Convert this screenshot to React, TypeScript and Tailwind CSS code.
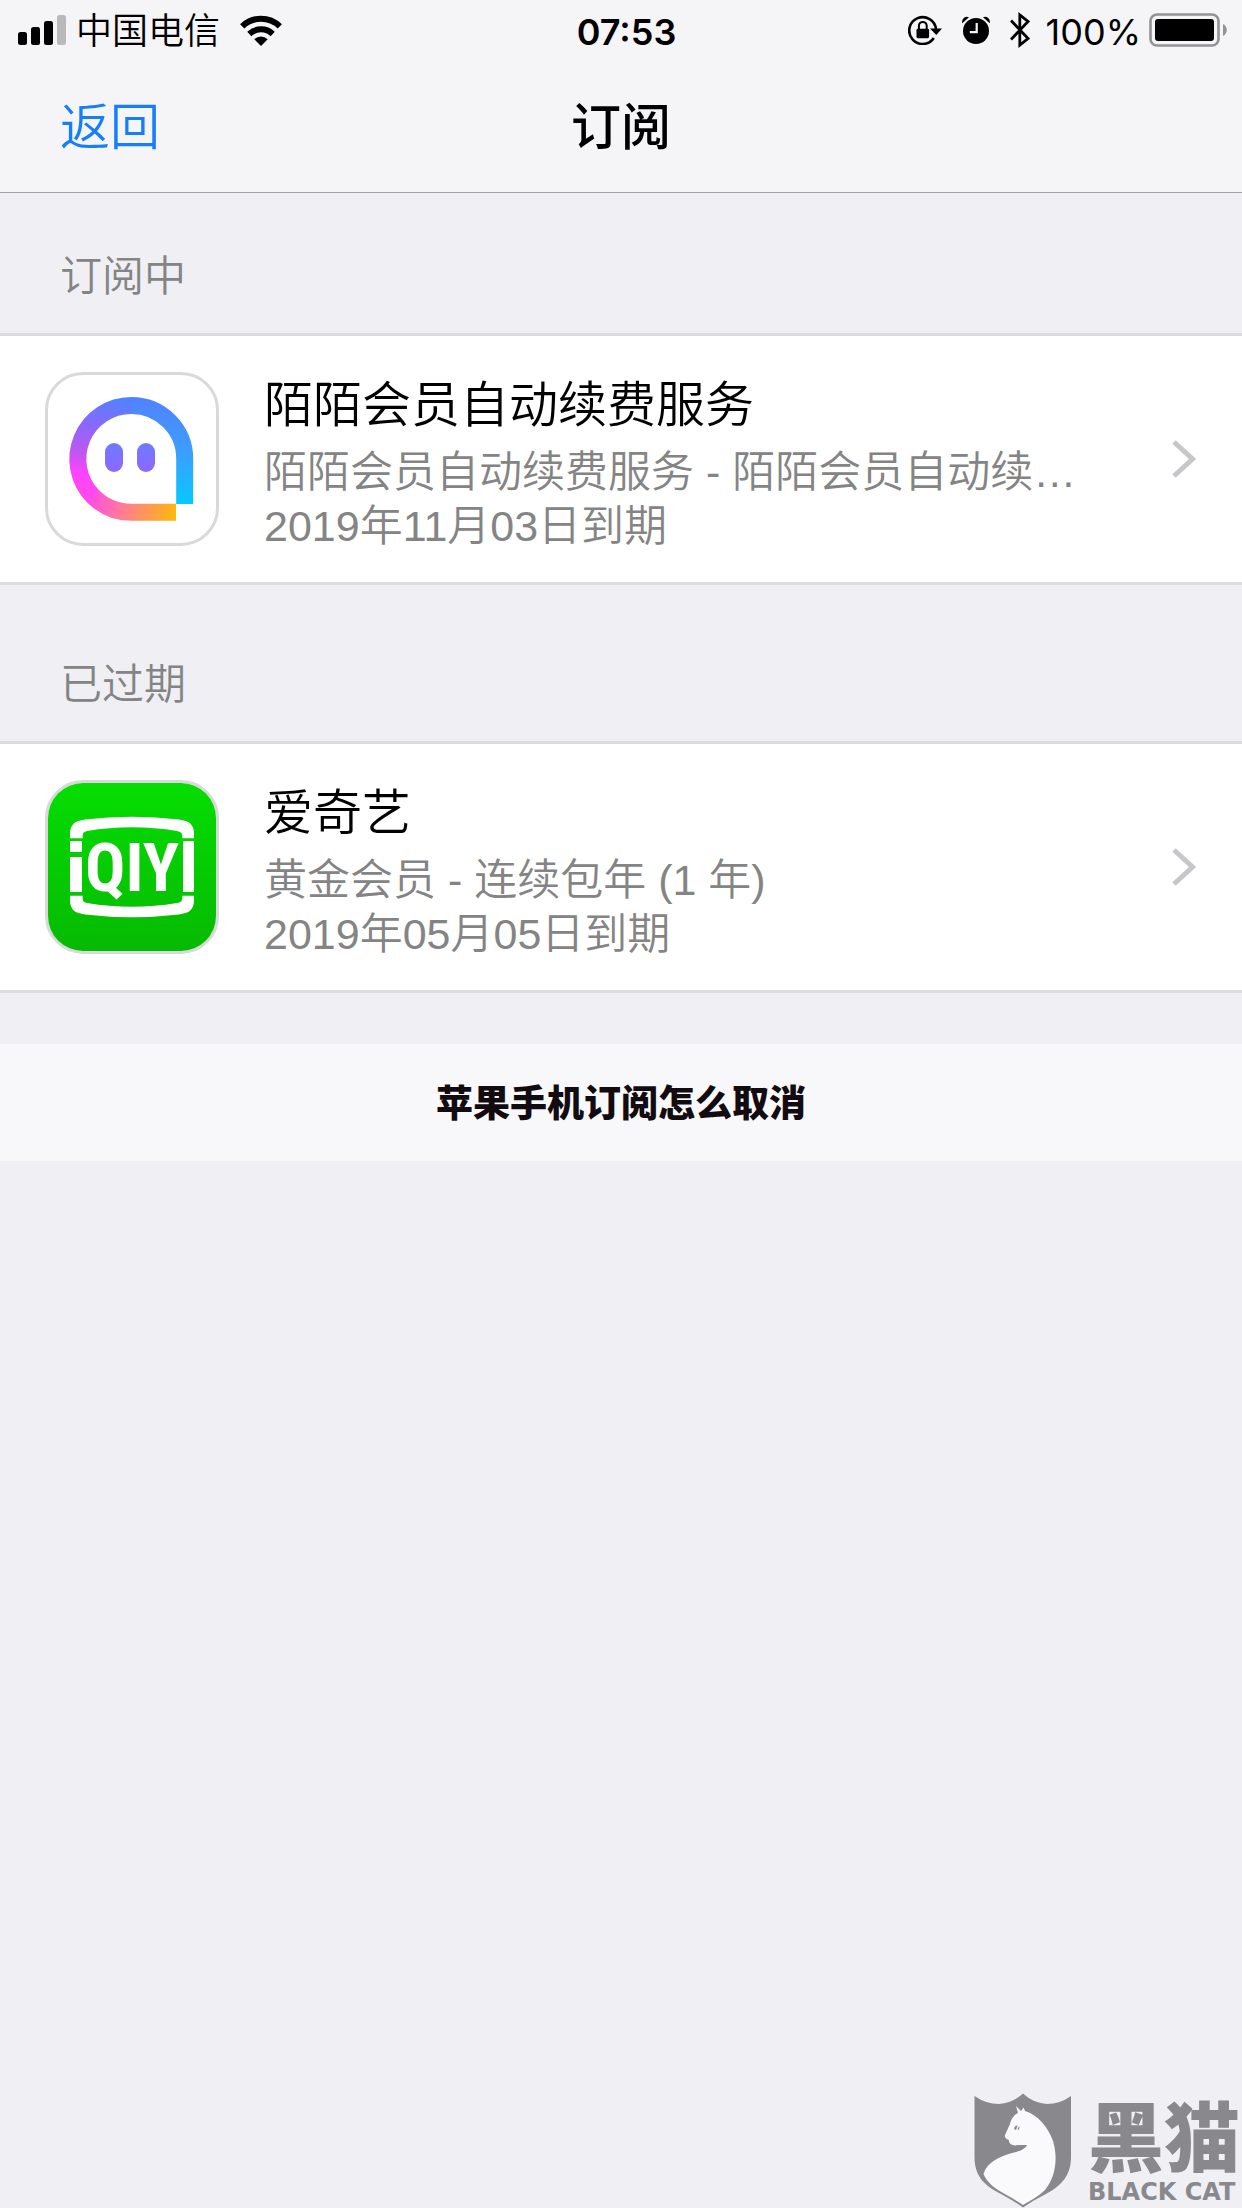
import React from "react";

interface Subscription {
  id: string;
  name: string;
  plan: string;
  expiry: string;
  icon: () => React.JSX.Element;
}

interface SubscriptionGroup {
  id: string;
  title: string;
  items: Subscription[];
}

function MomoIcon() {
  return (
    <svg viewBox="3 3 168 168" className="size-full" aria-hidden="true">
      <defs>
        <linearGradient id="momo-right" gradientUnits="userSpaceOnUse" x1="0" y1="25" x2="0" y2="132">
          <stop offset="0" stopColor="#5182ff" />
          <stop offset="0.5" stopColor="#3d9dff" />
          <stop offset="1" stopColor="#06c8ff" />
        </linearGradient>
        <linearGradient id="momo-left" gradientUnits="userSpaceOnUse" x1="70" y1="25" x2="45" y2="118">
          <stop offset="0" stopColor="#5182ff" />
          <stop offset="0.35" stopColor="#8a68ff" />
          <stop offset="0.65" stopColor="#bd57ee" />
          <stop offset="0.85" stopColor="#fb43ff" />
          <stop offset="1" stopColor="#ff48ee" />
        </linearGradient>
        <linearGradient id="momo-bottom" gradientUnits="userSpaceOnUse" x1="44" y1="118" x2="131" y2="140">
          <stop offset="0" stopColor="#ff48ee" />
          <stop offset="0.4" stopColor="#ff7a98" />
          <stop offset="1" stopColor="#ffb80c" />
        </linearGradient>
        <linearGradient id="momo-eye" x1="0" y1="0" x2="0" y2="1">
          <stop offset="0" stopColor="#6c7cff" />
          <stop offset="1" stopColor="#8d67ff" />
        </linearGradient>
      </defs>
      <g fill="none" strokeWidth="17">
        <path d="M139.7 132V87A53.3 53.3 0 0 0 86 33.5" stroke="url(#momo-right)" />
        <path d="M86.5 33.5A53.5 53.5 0 0 0 48.2 124.5" stroke="url(#momo-left)" />
        <path d="M47.8 124A53.5 53.5 0 0 0 86.5 140.3H131" stroke="url(#momo-bottom)" />
      </g>
      <rect x="60" y="71" width="18" height="29" rx="9" fill="url(#momo-eye)" />
      <rect x="92" y="71" width="18" height="29" rx="9" fill="url(#momo-eye)" />
    </svg>
  );
}

function IqiyiIcon() {
  const frame =
    "M25 58.3V54C25 44 30 41 40 39.5Q87 34 134 39.5C144 41 149 44 149 54V58.3H137.3V55Q137 52 132 51Q87 43.5 42 51Q37.7 52 37.7 55V58.3Z";

  return (
    <svg viewBox="3 3 168 168" className="size-full" aria-hidden="true">
      <defs>
        <linearGradient id="iqiyi-bg" x1="0" y1="0" x2="0" y2="1">
          <stop offset="0" stopColor="#06de02" />
          <stop offset="1" stopColor="#06b902" />
        </linearGradient>
      </defs>
      <rect width="174" height="174" fill="url(#iqiyi-bg)" />
      <g fill="#fff">
        <path d={frame} />
        <path d={frame} transform="matrix(1 0 0 -1 0 174)" />
        <rect x="25" y="61" width="12" height="11" />
        <rect x="25" y="77" width="12" height="35" />
        <rect x="138" y="61" width="11" height="51" />
        <text
          x="87"
          y="111"
          textAnchor="middle"
          fontSize="67"
          className="font-['Liberation_Sans_Narrow','Roboto_Condensed','DejaVu_Sans_Condensed',sans-serif] font-bold"
        >
          QIY
        </text>
      </g>
    </svg>
  );
}

const groups: SubscriptionGroup[] = [
  {
    id: "active",
    title: "订阅中",
    items: [
      {
        id: "momo",
        name: "陌陌会员自动续费服务",
        plan: "陌陌会员自动续费服务 - 陌陌会员自动续费服务",
        expiry: "2019年11月03日到期",
        icon: MomoIcon,
      },
    ],
  },
  {
    id: "expired",
    title: "已过期",
    items: [
      {
        id: "iqiyi",
        name: "爱奇艺",
        plan: "黄金会员 - 连续包年 (1 年)",
        expiry: "2019年05月05日到期",
        icon: IqiyiIcon,
      },
    ],
  },
];

function StatusBar() {
  return (
    <div className="grid h-15 grid-cols-[1fr_auto_1fr] items-center pr-[15px] pl-[18px] text-[36px] leading-[44px] text-black">
      <div className="flex items-center">
        <svg viewBox="0 0 48 30" className="h-[30px] w-12" aria-hidden="true">
          <rect x="0" y="17" width="9" height="13" rx="2.5" />
          <rect x="13" y="12" width="9" height="18" rx="2.5" />
          <rect x="26" y="6" width="9" height="24" rx="2.5" />
          <rect x="39" y="0" width="9" height="30" rx="2.5" fill="#b9b9bb" />
        </svg>
        <span className="ml-2.5 pt-1 font-[350]">中国电信</span>
        <svg viewBox="0 0 42 31" className="ml-5 h-[31px] w-[42px]" aria-hidden="true">
          <g fill="none" stroke="#000" strokeWidth="6">
            <path d="M2.2 11.3A27 27 0 0 1 39.8 11.3" />
            <path d="M9.3 19A17 17 0 0 1 32.7 19" />
          </g>
          <path d="M21 31L14.3 24.2A9.6 9.6 0 0 1 27.7 24.2Z" />
        </svg>
      </div>

      <time className="pt-1 pl-2 font-['Inter',sans-serif] font-semibold">07:53</time>

      <div className="flex items-center justify-end">
        <svg viewBox="0 0 34 30" className="h-[30px] w-[34px]" aria-hidden="true">
          <path d="M25.8 23A13.4 13.4 0 1 1 28 14.4" fill="none" stroke="#000" strokeWidth="2.6" />
          <path d="M22 13.5H34L28.3 20Z" />
          <rect x="8.5" y="13.8" width="12.6" height="9.4" rx="1.4" />
          <path d="M10.9 14.5V10.8A3.9 3.9 0 0 1 18.7 10.8V14.5" fill="none" stroke="#000" strokeWidth="2" />
        </svg>
        <svg viewBox="0 0 28 30" className="ml-5 h-[30px] w-7" aria-hidden="true">
          <circle cx="14" cy="16" r="13" />
          <path d="M0.3 8.2A5 5 0 0 1 7 2.2Z" />
          <path d="M27.7 8.2A5 5 0 0 0 21 2.2Z" />
          <path d="M14.7 8V17.2H7.8" fill="none" stroke="#f5f5f7" strokeWidth="2.2" />
        </svg>
        <svg viewBox="0 0 20 36" className="ml-5 h-9 w-5" aria-hidden="true">
          <path d="M1 8.5L18 26.5L9.8 33V3L18 9.5L1 27.5" fill="none" stroke="#000" strokeWidth="2.8" />
        </svg>
        <span className="ml-4 pt-1 font-['Inter',sans-serif]">100%</span>
        <svg viewBox="0 0 78 34" className="ml-2 h-[34px] w-[78px]" aria-hidden="true">
          <rect x="1.5" y="1.5" width="68" height="31" rx="6.5" fill="none" stroke="#939395" strokeWidth="2.6" />
          <rect x="6" y="6" width="59" height="22" rx="3" />
          <path d="M74 11C79 13 79 21 74 23Z" fill="#939395" />
        </svg>
      </div>
    </div>
  );
}

function SubscriptionRow({ item }: { item: Subscription }) {
  const Icon = item.icon;

  return (
    <li className="border-y-3 border-[#dcdcdf] bg-white">
      <a href={`#${item.id}`} className="flex items-center px-[45px] py-[29px]">
        <div className="size-[174px] shrink-0 overflow-hidden rounded-[38px] border-3 border-[#d9d9d9]">
          <Icon />
        </div>
        <div className="ml-[45px] min-w-0 flex-1 font-[350]">
          <h3 className="truncate text-[49px] leading-[80px] text-black">{item.name}</h3>
          <p className="truncate text-[43px] leading-[54px] text-[#848484]">{item.plan}</p>
          <p className="truncate text-[43px] leading-[54px] text-[#848484]">{item.expiry}</p>
        </div>
        <svg viewBox="0 0 26 40" className="ml-[70px] h-10 w-[26px] shrink-0" aria-hidden="true">
          <path d="M3 3L21.5 20L3 37" fill="none" stroke="#c7c7cb" strokeWidth="5" />
        </svg>
      </a>
    </li>
  );
}

function Watermark() {
  return (
    <div className="mt-auto flex items-end gap-4 self-end text-[#89888c]">
      <svg viewBox="0 0 98 115" className="h-[115px] w-[98px]" aria-hidden="true">
        <path
          d="M0.5 3Q12 11 25 11Q39 10 49 0.5Q59 10 73 11Q86 11 97 3V64C97 82 88 93 70 102Q58 108 49 114.5Q40 108 27 101C9 92 0.5 82 0.5 64Z"
          fill="currentColor"
        />
        <path
          d="M42 13L47 18L49.500 14.500L51 18C64 22 74 34 79 48C84 64 82 84 71 97C65 103 57 107 49 112Q42 107 29 100C20 95 13 89 9.500 81C13 69 25 64 38 60C47 58 51 56 53 52H43C39 54 34 50 35 47Q30 45 31 42L36 31C37 26 40 22 44 20Z"
          fill="#fafafc"
        />
        <path d="M40 36Q41 32 43.500 32.500L42 37Z" fill="currentColor" />
        <path d="M43.500 36.500L45 33Q46.500 35 44 37Z" fill="currentColor" />
      </svg>
      <div className="flex flex-col pr-0.5 pb-1">
        <span className="text-[76px] leading-[80px] font-black">黑猫</span>
        <span className="font-['DejaVu_Sans',sans-serif] text-[24px] leading-[24px] font-bold">BLACK CAT</span>
      </div>
    </div>
  );
}

export default function App() {
  return (
    <div className="flex min-h-screen flex-col bg-[#efeff4] font-['Liberation_Sans','Noto_Sans_CJK_SC',sans-serif]">
      <header className="border-b border-[#a4a4a9] bg-[#f5f5f7]">
        <StatusBar />
        <nav className="grid h-33 grid-cols-[1fr_auto_1fr] items-center px-[60px] pt-1 text-[50px] leading-[64px]">
          <button type="button" className="justify-self-start font-[350] text-[#157efb]">
            返回
          </button>
          <h1 className="font-medium text-black">订阅</h1>
        </nav>
      </header>

      <main>
        {groups.map((group, index) => (
          <section key={group.id}>
            <h2
              className={`px-[60px] pb-7 text-[42px] leading-[56px] font-[350] text-[#848484] ${
                index === 0 ? "pt-14" : "pt-18"
              }`}
            >
              {group.title}
            </h2>
            <ul>
              {group.items.map((item) => (
                <SubscriptionRow key={item.id} item={item} />
              ))}
            </ul>
          </section>
        ))}

        <p className="mt-[51px] bg-[#f8f8fa] pt-[34px] pb-[30px] text-center text-[37px] leading-[53px] font-black text-[#120c10]">
          苹果手机订阅怎么取消
        </p>
      </main>

      <Watermark />
    </div>
  );
}
